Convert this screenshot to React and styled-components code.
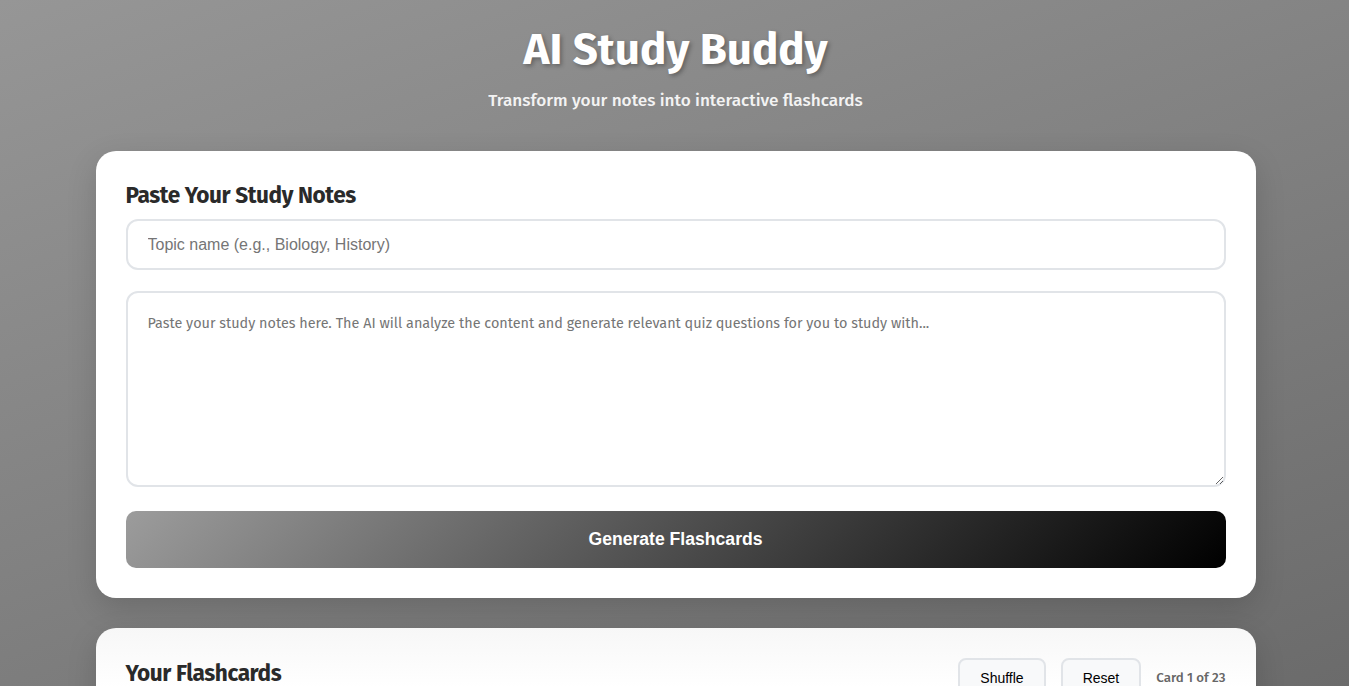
import styled, { createGlobalStyle } from 'styled-components';

const GlobalStyle = createGlobalStyle`
  * {
    box-sizing: border-box;
  }

  html,
  body {
    margin: 0;
    padding: 0;
  }

  body {
    min-height: 100vh;
    font-family: 'Fira Sans', Roboto, 'Noto Sans', sans-serif;
    background: linear-gradient(160deg, #969696 0%, #6b6b6b 100%);
    background-attachment: fixed;
    color: #333;
  }
`;

const Page = styled.div`
  max-width: 1160px;
  margin: 0 auto;
  padding: 23px 0 40px;
  transform: translateX(1px);
`;

const Header = styled.header`
  text-align: center;
  color: #fff;
  margin-bottom: 40px;
`;

const Title = styled.h1`
  margin: 0 0 14px;
  font-size: 44px;
  font-weight: 700;
  text-shadow: 2px 2px 4px rgba(0, 0, 0, 0.3);
`;

const Subtitle = styled.p`
  margin: 0;
  font-size: 17.2px;
  font-weight: 500;
  opacity: 0.9;
`;

const Card = styled.section`
  background: ${(p) => (p.$faded ? 'linear-gradient(180deg, #f7f7f7 0%, #fff 60px)' : '#fff')};
  border-radius: 20px;
  padding: 30px;
  margin-bottom: 30px;
  box-shadow: 0 10px 30px rgba(0, 0, 0, 0.15);
`;

const SectionTitle = styled.h2`
  margin: 1px 0 10px;
  font-size: 22.6px;
  font-weight: 700;
  letter-spacing: -0.4px;
  color: #2a2a2a;
`;

const TopicInput = styled.input`
  display: block;
  width: 100%;
  height: 51px;
  padding: 0 20px;
  border: 2px solid #e1e4e8;
  border-radius: 12px;
  font-family: 'Liberation Sans', Arial, sans-serif;
  font-size: 16px;
  color: #333;
  outline: none;
  margin-bottom: 21px;

  &::placeholder {
    color: #757575;
  }
`;

const NotesArea = styled.textarea`
  display: block;
  width: 100%;
  height: 196px;
  padding: 20px;
  border: 2px solid #e1e4e8;
  border-radius: 12px;
  font-family: inherit;
  font-size: 14.4px;
  line-height: 1.5;
  color: #333;
  outline: none;
  resize: vertical;
  margin-bottom: 24px;

  &::placeholder {
    color: #757575;
  }
`;

const GenerateButton = styled.button`
  display: block;
  width: 100%;
  height: 57px;
  border: none;
  border-radius: 10px;
  background: linear-gradient(135deg, #9c9c9c 0%, #000 100%);
  color: #fff;
  font-family: 'Liberation Sans', Arial, sans-serif;
  font-size: 17.6px;
  font-weight: 700;
  cursor: pointer;
`;

const CardHeader = styled.div`
  display: flex;
  align-items: center;
  justify-content: space-between;
`;

const Controls = styled.div`
  display: flex;
  align-items: center;
  gap: 15px;
`;

const SmallButton = styled.button`
  height: 40px;
  padding: 0 20px;
  border: 2px solid #e1e4e8;
  border-radius: 8px;
  background: #f8f9fa;
  font-family: 'Liberation Sans', Arial, sans-serif;
  font-size: 14px;
  color: #000;
  cursor: pointer;
`;

const Counter = styled.span`
  font-size: 13.3px;
  font-weight: 500;
  color: #666;
`;

export default function App() {
  return (
    <>
      <GlobalStyle />
      <Page>
        <Header>
          <Title>AI Study Buddy</Title>
          <Subtitle>Transform your notes into interactive flashcards</Subtitle>
        </Header>

        <Card>
          <SectionTitle>Paste Your Study Notes</SectionTitle>
          <TopicInput placeholder="Topic name (e.g., Biology, History)" />
          <NotesArea placeholder="Paste your study notes here. The AI will analyze the content and generate relevant quiz questions for you to study with..." />
          <GenerateButton>Generate Flashcards</GenerateButton>
        </Card>

        <Card $faded>
          <CardHeader>
            <SectionTitle>Your Flashcards</SectionTitle>
            <Controls>
              <SmallButton>Shuffle</SmallButton>
              <SmallButton>Reset</SmallButton>
              <Counter>Card 1 of 23</Counter>
            </Controls>
          </CardHeader>
        </Card>
      </Page>
    </>
  );
}
